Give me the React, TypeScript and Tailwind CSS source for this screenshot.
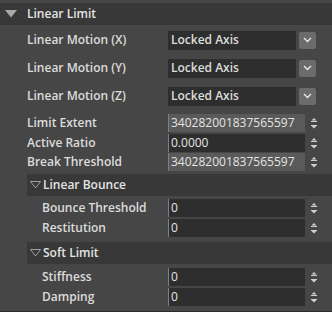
import React from "react";

const font = { fontFamily: '"Open Sans", "Noto Sans", sans-serif' };

function Chevron() {
  return (
    <div className="w-[17px] h-[17px] rounded-[2px] bg-[#6b6b6b] flex items-center justify-center">
      <svg width="9" height="6" viewBox="0 0 9 6">
        <path d="M1 1 L4.5 4.5 L8 1" stroke="#e8e8e8" strokeWidth="1.4" fill="none" />
      </svg>
    </div>
  );
}

function Spin() {
  return (
    <svg width="8" height="14" viewBox="0 0 8 14">
      <path d="M4 2 L6.5 4.5 H1.5 Z" fill="#d0d0d0" />
      <rect x="1" y="5" width="6" height="1" fill="#d0d0d0" />
      <rect x="1" y="9" width="6" height="1" fill="#d0d0d0" />
      <path d="M1.5 10 H6.5 L4 12.5 Z" fill="#d0d0d0" />
    </svg>
  );
}

function ComboRow({ label }: { label: string }) {
  return (
    <div className="flex items-center h-[28px] pl-[27px]">
      <div className="w-[141px] text-[12px] font-semibold text-[#dcdcdc]">{label}</div>
      <div className="w-[128px] h-[19px] bg-[#2e2e2e] flex items-center pl-[3px] text-[12px] font-semibold text-[#dcdcdc]">
        Locked Axis
      </div>
      <div className="ml-[3px]">
        <Chevron />
      </div>
    </div>
  );
}

function SpinRow({
  label,
  value,
  indent,
  light,
  h,
}: {
  label: string;
  value: string;
  indent?: boolean;
  light?: boolean;
  h: string;
}) {
  return (
    <div className={`flex items-center ${h} ${indent ? "pl-[42px]" : "pl-[27px]"}`}>
      <div className={`${indent ? "w-[126px]" : "w-[141px]"} text-[12px] font-semibold text-[#dcdcdc]`}>{label}</div>
      <div
        className={`w-[137px] h-[18px] flex items-center pl-[2px] text-[12px] text-[#e4e4e4] border-l border-[#808080] ${
          light ? "bg-[#5a5a5a]" : "bg-[#2e2e2e]"
        }`}
      >
        {value}
      </div>
      <div className="ml-[5px] flex items-center">
        <Spin />
      </div>
    </div>
  );
}

function SubHeader({ label }: { label: string }) {
  return (
    <div className="ml-[27px] h-[22px] bg-[#383838] flex items-center pl-[3px]">
      <svg width="11" height="8" viewBox="0 0 11 8" className="mr-[2px]">
        <path d="M0.5 0.5 H10.5 L5.5 7 Z" fill="none" stroke="#a0a0a0" strokeWidth="1" />
      </svg>
      <span className="text-[12px] font-semibold text-[#e4e4e4]">{label}</span>
    </div>
  );
}

export default function App() {
  return (
    <div style={font} className="w-[332px] h-[312px] bg-[#464646] overflow-hidden border-b border-[#2a2a2a]">
      <div className="h-[3px]" />
      <div className="h-[22px] bg-[#383838] flex items-center pl-[5px]">
        <svg width="12" height="8" viewBox="0 0 12 8" className="mr-[10px]">
          <path d="M0 0 H12 L6 7.5 Z" fill="#a8a8a8" />
        </svg>
        <span className="text-[12px] font-semibold text-[#e4e4e4]">Linear Limit</span>
      </div>
      <div className="h-[1px]" />
      <ComboRow label="Linear Motion (X)" />
      <ComboRow label="Linear Motion (Y)" />
      <ComboRow label="Linear Motion (Z)" />
      <div className="h-[3px]" />
      <SpinRow label="Limit Extent" value="340282001837565597" light h="h-[20px]" />
      <SpinRow label="Active Ratio" value="0.0000" h="h-[19px]" />
      <SpinRow label="Break Threshold" value="340282001837565597" light h="h-[20px]" />
      <div className="h-[2px]" />
      <SubHeader label="Linear Bounce" />
      <div className="h-[2px]" />
      <SpinRow label="Bounce Threshold" value="0" indent h="h-[20px]" />
      <SpinRow label="Restitution" value="0" indent h="h-[20px]" />
      <div className="h-[4px]" />
      <SubHeader label="Soft Limit" />
      <div className="h-[2px]" />
      <SpinRow label="Stiffness" value="0" indent h="h-[21px]" />
      <SpinRow label="Damping" value="0" indent h="h-[20px]" />
    </div>
  );
}
